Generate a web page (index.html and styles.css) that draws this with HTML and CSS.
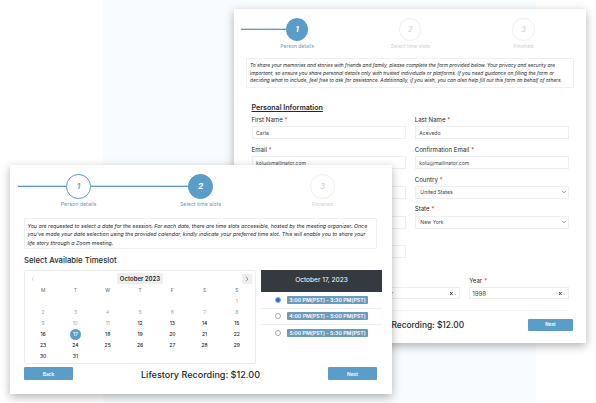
FILE: index.html
```html
<!DOCTYPE html>
<html lang="en">
<head>
<meta charset="utf-8">
<title>Lifestory booking</title>
<link rel="stylesheet" href="styles.css">
</head>
<body>
<main class="stage">
  <section class="card details">
    <ol class="stepper">
      <li class="step current first"><span class="dot">1</span><span class="name">Person details</span></li>
      <li class="step"><span class="dot">2</span><span class="name">Select time slots</span></li>
      <li class="step"><span class="dot">3</span><span class="name">Finished</span></li>
    </ol>
    <p class="notice">To share your memories and stories with friends and family, please complete the form provided below. Your privacy and security are<br>important, so ensure you share personal details only with trusted individuals or platforms. If you need guidance on filling the form or<br>deciding what to include, feel free to ask for assistance. Additionally, if you wish, you can also help fill out this form on behalf of others.</p>
    <form class="form">
      <h2>Personal Information</h2>
      <div class="fields">
        <div class="field"><label>First Name <i>*</i></label><div class="input">Carla</div></div>
        <div class="field"><label>Last Name <i>*</i></label><div class="input">Acevedo</div></div>
        <div class="field"><label>Email <i>*</i></label><div class="input">kolu@mailinator.com</div></div>
        <div class="field"><label>Confirmation Email <i>*</i></label><div class="input">kolu@mailinator.com</div></div>
        <div class="field"><label></label><div class="input"></div></div>
        <div class="field"><label>Country <i>*</i></label><div class="input select">United States<svg viewBox="0 0 6 4"><path d="M1 .8 3 2.8 5 .8"/></svg></div></div>
        <div class="field"><label></label><div class="input"></div></div>
        <div class="field"><label>State <i>*</i></label><div class="input select">New York<svg viewBox="0 0 6 4"><path d="M1 .8 3 2.8 5 .8"/></svg></div></div>
        <div class="field"><label></label><div class="input"></div></div>
      </div>
      <div class="birth">
        <div class="field"><label></label><div class="input"></div></div>
        <div class="field"><label></label><div class="input combo">December<svg viewBox="0 0 8 5"><path class="x" d="M1 1 3.6 4M3.6 1 1 4"/><path class="v" d="M5.3 2.7 6.3 3.7 7.3 2.7"/></svg></div></div>
        <div class="field"><label>Year <i>*</i></label><div class="input combo">1998<svg viewBox="0 0 8 5"><path class="x" d="M1 1 3.6 4M3.6 1 1 4"/><path class="v" d="M5.3 2.7 6.3 3.7 7.3 2.7"/></svg></div></div>
      </div>
    </form>
    <footer class="actions"><span></span><strong>Lifestory Recording: $12.00</strong><button type="button">Next</button></footer>
  </section>

  <section class="card slots">
    <ol class="stepper">
      <li class="step done first"><span class="dot">1</span><span class="name">Person details</span></li>
      <li class="step current"><span class="dot">2</span><span class="name">Select time slots</span></li>
      <li class="step"><span class="dot">3</span><span class="name">Finished</span></li>
    </ol>
    <p class="notice">You are requested to select a date for the session. For each date, there are time slots accessible, hosted by the meeting organizer. Once<br>you've made your date selection using the provided calendar, kindly indicate your preferred time slot. This will enable you to share your<br>life story through a Zoom meeting.</p>
    <h2>Select Available Timeslot</h2>
    <div class="picker">
      <div class="calendar">
        <div class="month">
          <span class="nav off"><svg viewBox="0 0 4 6"><path d="M3 .8 1 3 3 5.2"/></svg></span>
          <span class="label">October 2023</span>
          <span class="nav"><svg viewBox="0 0 4 6"><path d="M1 .8 3 3 1 5.2"/></svg></span>
        </div>
        <div class="days">
          <b>M</b><b>T</b><b>W</b><b>T</b><b>F</b><b>S</b><b>S</b>
          <span></span><span></span><span></span><span></span><span></span><span></span><span class="past">1</span>
          <span class="past">2</span><span class="past">3</span><span class="past">4</span><span class="past">5</span><span class="past">6</span><span class="past">7</span><span class="past">8</span>
          <span class="past">9</span><span class="past">10</span><span class="past">11</span><span>12</span><span>13</span><span>14</span><span>15</span>
          <span>16</span><span class="picked">17</span><span>18</span><span>19</span><span>20</span><span>21</span><span>22</span>
          <span>23</span><span>24</span><span>25</span><span>26</span><span>27</span><span>28</span><span>29</span>
          <span>30</span><span>31</span>
        </div>
      </div>
      <div class="times">
        <h3>October 17, 2023</h3>
        <div class="time"><span class="radio on"></span><span class="badge">3:00 PM(PST) - 3:30 PM(PST)</span></div>
        <div class="time"><span class="radio"></span><span class="badge">4:00 PM(PST) - 5:00 PM(PST)</span></div>
        <div class="time"><span class="radio"></span><span class="badge">5:00 PM(PST) - 5:30 PM(PST)</span></div>
      </div>
    </div>
    <footer class="actions"><button type="button">Back</button><strong>Lifestory Recording: $12.00</strong><button type="button">Next</button></footer>
  </section>
</main>
</body>
</html>
```
FILE: styles.css
```css
* { box-sizing: border-box; margin: 0; padding: 0; }
body { font-family: Inter, "Liberation Sans", sans-serif; color: #24292d; background: #fff; overflow: hidden; }
.stage {
  display: grid; width: 596px; height: 403px; overflow: hidden;
  background: linear-gradient(#f8fcff, #f8fcff) 103px 0 / 433px 403px no-repeat;
}
.card { grid-area: 1 / 1; background: #fff; box-shadow: 0 3px 9px rgba(0, 0, 0, .3); white-space: nowrap; }
.details { width: 352px; height: 334px; margin: 9px 0 0 234px; }
.slots { width: 382px; height: 229px; margin: 165px 0 0 10px; z-index: 1; }

/* Stepper */
.stepper { display: grid; grid-template-columns: repeat(3, 1fr); list-style: none; }
.step { display: flex; flex-direction: column; align-items: center; color: #d0d0d0; }
.dot {
  display: flex; align-items: center; justify-content: center;
  border: 1px solid #f0f0ee; border-radius: 50%; background: #fff; font-style: italic;
}
.step.done, .step.current {
  color: #5b9dc9;
  background: linear-gradient(rgba(91, 157, 201, .35) 1px, #5b9dc9 1px) 0 var(--mid) / 50% 2px no-repeat;
}
.done .dot { border-color: #5b9dc9; color: #5b9dc9; font-weight: 600; }
.current .dot { border-color: #5b9dc9; background: #5b9dc9; color: #fff; font-weight: 700; }
.details .stepper { --mid: 10px; padding: 9px 6px 0 6.5px; height: 49px; }
.details .dot { width: 22.5px; height: 22.5px; font-size: 7.4px; }
.details .name { font-size: 5px; line-height: 8px; margin-top: 1.5px; }
.slots .stepper { --mid: 11px; padding: 9px 8.5px 0 7.5px; height: 53px; }
.slots .dot { width: 24.5px; height: 24.5px; font-size: 8.2px; }
.slots .name { font-size: 5.3px; line-height: 8px; margin-top: 1.5px; }
.slots .step.done { background-size: 100% 2px; }

/* Notices */
.notice { border: 1px solid #f0f0f0; font-style: italic; }
.details .notice { margin: 0 12px; height: 30px; padding: 3px 3px; font-size: 4.86px; line-height: 7.7px; }
.slots .notice { margin: 0 15px 0 14px; height: 31px; padding: 3px 2.5px; font-size: 5.28px; line-height: 8.3px; }

/* Personal information */
.form { padding: 15px 17px 0 17.5px; }
.form h2 { font-size: 7.1px; line-height: 10px; font-weight: 600; text-decoration: underline; }
.fields { display: grid; grid-template-columns: 1fr 1fr; column-gap: 9px; }
.field { height: 29.8px; }
.field label { display: block; height: 13.3px; line-height: 14.6px; font-size: 6.1px; }
.field label i { color: #f44336; font-style: normal; font-weight: 600; }
.input {
  display: flex; align-items: center; justify-content: space-between; height: 13px;
  padding: 0 3.6px; border: 1px solid #efefef; font-size: 5.1px; color: #42484d;
}
.select { padding: 0 1px 0 4.6px; }
.select svg { width: 6px; height: 4px; }
svg { fill: none; stroke: #495057; stroke-width: .6; flex: none; }
.birth { display: grid; grid-template-columns: repeat(3, 1fr); column-gap: 9px; margin-top: 12px; height: 37px; border-bottom: 1px solid #f4f4f4; }
.combo { height: 12px; padding: 0 2px; font-size: 6.2px; }
.birth .field:nth-child(2) .combo { padding-left: 1.5px; }
.combo svg { width: 8px; height: 5px; }
.combo .x { stroke: #333; stroke-width: .9; }
.combo .v { stroke: #aaa; }

/* Footer */
.actions { display: grid; grid-template-columns: 49px 1fr 49px; align-items: center; }
.actions strong { text-align: center; font-size: 9.05px; font-weight: 500; }
.actions button { border: 0; border-radius: 1px; background: #5b9dc9; color: #fff; font: 600 4.8px Inter, sans-serif; height: 13px; }
.details .actions { grid-template-columns: 45px 1fr 45px; padding: 8px 13px 0 11px; }
.details .actions strong { font-size: 8.4px; padding-top: 1px; }
.details .actions button { height: 12px; font-size: 4.6px; }
.slots .actions { padding: 3px 15px 0 14px; }
.slots .actions strong { padding-top: 1px; }

/* Date and time picker */
.slots h2 { margin: 5px 0 0 14px; font-size: 7.75px; line-height: 12px; font-weight: 500; }
.picker { display: grid; grid-template-columns: 232px 121px; column-gap: 5px; margin: 4px 0 0 14px; height: 94px; }
.calendar { border: 1px solid #ececec; border-radius: 2px; padding: 2px 2px 0; }
.month { display: flex; justify-content: space-between; align-items: center; height: 11px; padding: 0 1px; }
.month .label { background: #efefef; border-radius: 1px; font-size: 6px; font-weight: 600; line-height: 11px; padding: 0 3px; }
.nav { display: flex; align-items: center; justify-content: center; width: 10px; height: 10px; background: #efefef; border-radius: 1px; }
.nav.off { background: none; opacity: .35; }
.nav svg { width: 4px; height: 6px; }
.days { display: grid; grid-template-columns: repeat(7, 1fr); grid-auto-rows: 11.05px; margin-top: .5px; justify-items: center; align-items: center; font-size: 5px; font-weight: 500; }
.days b { font-size: 4.8px; font-weight: 500; color: #748092; }
.past { color: #9aa5b4; font-weight: 400; }
.picked { width: 11px; height: 11px; line-height: 11px; text-align: center; border-radius: 50%; background: #5b9dc9; color: #fff; }
.times h3 { height: 22px; line-height: 20px; text-align: center; background: #343a40; color: #fff; font-size: 6.6px; font-weight: 400; }
.time { display: flex; align-items: center; height: 16.6px; padding-left: 14px; border-bottom: 1px solid #efefef; }
.time:last-child { border: 0; }
.radio { width: 6px; height: 6px; border: 1px solid #a8a8a8; border-radius: 50%; margin-right: 6px; }
.radio.on { border: 1px solid #7fadf8; background: #2468f2; }
.badge { width: 81px; height: 8px; line-height: 8px; text-align: center; border-radius: 1px; background: #6b9abb; color: #fff; font-size: 5.25px; font-weight: 600; }
```
